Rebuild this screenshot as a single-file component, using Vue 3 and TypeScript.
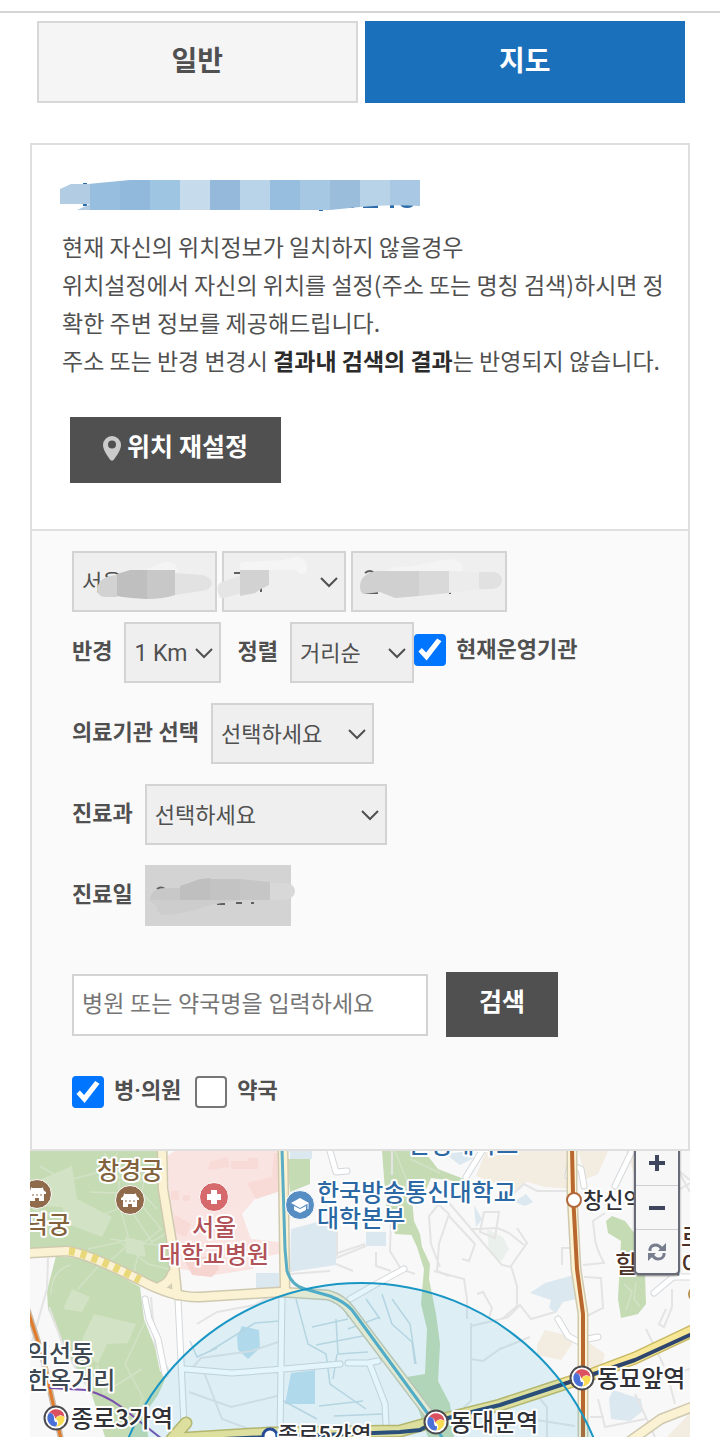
<script setup lang="ts">
import { ref } from 'vue'

interface MapLabel {
  text: string
  x: number
  y: number
  kind: string
  anchor?: 'start' | 'middle' | 'end'
}

const view = ref<'list' | 'map'>('map')
const radius = ref('1 Km')
const order = ref('거리순')
const institution = ref('')
const department = ref('')
const openNow = ref(true)
const hospital = ref(true)
const pharmacy = ref(false)
const keyword = ref('')

const mapLabels: MapLabel[] = [
  { text: '창경궁', x: 130, y: 1180, kind: 'palace', anchor: 'middle' },
  { text: '창덕궁', x: 70, y: 1234, kind: 'palace', anchor: 'end' },
  { text: '서울', x: 214, y: 1237, kind: 'clinic', anchor: 'middle' },
  { text: '대학교병원', x: 214, y: 1264, kind: 'clinic', anchor: 'middle' },
  { text: '한국방송통신대학교', x: 317, y: 1202, kind: 'school' },
  { text: '대학본부', x: 317, y: 1228, kind: 'school' },
  { text: '한성대학교', x: 408, y: 1154, kind: 'school' },
  { text: '익선동', x: 27, y: 1363, kind: 'area' },
  { text: '한옥거리', x: 27, y: 1390, kind: 'area' },
  { text: '종로3가역', x: 71, y: 1428, kind: 'station' },
  { text: '종로5가역', x: 278, y: 1443, kind: 'station small' },
  { text: '동대문역', x: 450, y: 1432, kind: 'station' },
  { text: '창신역', x: 583, y: 1209, kind: 'station small' },
  { text: '동묘앞역', x: 597, y: 1388, kind: 'station' },
  { text: '힐스테이', x: 615, y: 1274, kind: 'estate' },
  { text: '로', x: 681, y: 1247, kind: 'estate' },
]

const interchanges = [
  { x: 56, y: 1419 },
  { x: 436, y: 1423 },
  { x: 582, y: 1379 },
]

const titleMosaic = ['#b1cce3', '#97bddf', '#91b9db', '#9ec5e2', '#c6dbec', '#95b9da', '#b9d4e8', '#98bedf', '#a7c8e2', '#9abddc', '#b8d2e7', '#a8c8e3']
</script>

<template>
  <main class="page">
    <nav class="tabs" aria-label="보기 방식">
      <button type="button" class="tab" :class="{ active: view === 'list' }" @click="view = 'list'">일반</button>
      <button type="button" class="tab" :class="{ active: view === 'map' }" @click="view = 'map'">지도</button>
    </nav>

    <div class="content">
      <section class="panel">
        <div class="intro">
          <svg class="address" width="370" height="36" viewBox="0 0 370 36" aria-hidden="true">
            <defs>
              <clipPath id="smudge">
                <path d="M0 9 L11 4 L28 4 L70 0 H360 V26 Q330 24 300 27 L260 31 H15 L30 24 H0Z" />
              </clipPath>
            </defs>
            <path class="address-ink" d="M23 3h4v23h-4zM259 29h4v2h-4zM289 26h5v2h-5zM303 25h15v3h-15zM330 25h4v3h-4zM340 24h14q-1 4-7 4t-7-4z" />
            <g clip-path="url(#smudge)">
              <rect v-for="(c, i) in titleMosaic" :key="i" :x="i * 30" y="0" width="30" height="30" :fill="c" />
            </g>
          </svg>
          <p class="guide">
            현재 자신의 위치정보가 일치하지 않을경우<br />
            위치설정에서 자신의 위치를 설정(주소 또는 명칭 검색)하시면 정확한 주변 정보를 제공해드립니다.<br />
            주소 또는 반경 변경시 <strong>결과내 검색의 결과</strong>는 반영되지 않습니다.
          </p>
          <button type="button" class="dark locate">
            <svg width="18" height="25" viewBox="0 0 18 25" aria-hidden="true">
              <path fill="#cbcbcb" fill-rule="evenodd" d="M9 0a9 9 0 0 1 9 9c0 5-5 12-7.500 15q-1.500 1.500-3 0C5 21 0 14 0 9a9 9 0 0 1 9-9zm0 4.500a4 4 0 1 0 0 8 4 4 0 0 0 0-8z" />
            </svg>
            <span>위치 재설정</span>
          </button>
        </div>

        <form class="filters" @submit.prevent>
          <div class="row region">
            <span class="picker city">
              <select aria-label="시도"><option>서울</option></select>
              <svg class="cover" viewBox="0 0 145 61" aria-hidden="true">
                <path d="M72 19 L92 11 Q106 9 106 21 H62Z" fill="#f4f4f4" />
                <path d="M25 38 Q27 25 45 24 V46 H35 Q26 47 25 38Z" fill="#d2d2d2" />
                <path d="M45 23 L58 19 H75 V48 Q55 47 45 45Z" fill="#bfbfbf" />
                <path d="M75 19 H103 V44 Q92 48 75 48Z" fill="#c8c8c8" />
                <path d="M103 22 L130 24 Q139 26 140 32 Q139 39 129 40 L103 44Z" fill="#e2e2e2" />
              </svg>
            </span>
            <span class="picker district">
              <select aria-label="시군구"><option></option></select>
              <svg class="chevron" width="18" height="12" viewBox="0 0 18 12" aria-hidden="true"><path d="M1 2l8 8 8-8" /></svg>
              <svg class="cover" viewBox="0 0 124 61" aria-hidden="true">
                <path class="ink" d="M12 22h7M39 36v5" />
                <path d="M18 19 Q16 11 23 11 L60 9 75 6 Q85 7 85 17 Q85 24 79 23 L74 19Z" fill="#f5f5f5" />
                <path d="M-3 44 Q-8 32 3 30 L20 24 V42 L2 47 Q-2 48-3 44Z" fill="#e5e5e5" />
                <path d="M18 19 H47 V34 L39 38 33 42 18 45Z" fill="#d2d2d2" />
              </svg>
            </span>
            <span class="picker town">
              <select aria-label="읍면동"><option></option></select>
              <svg class="cover" viewBox="0 0 156 61" aria-hidden="true">
                <path class="ink" d="M14 22q5-4 9 0M14 42h13M99 40v3" />
                <path d="M35 20 Q42 14 56 16 L97 8 Q112 8 112 20Z" fill="#f4f4f4" />
                <path d="M9 36 Q9 23 25 20 H68 V45 L44 47 29 41 13 43 Q9 42 9 36Z" fill="#d0d0d0" />
                <path d="M68 20 H98 V42 L68 45Z" fill="#d9d9d9" />
                <path d="M98 20 L128 22 V38 L98 42Z" fill="#ececec" />
                <path d="M128 21 H143 Q151 23 151 29 Q151 36 142 38 H128Z" fill="#e1e1e1" />
              </svg>
            </span>
          </div>

          <div class="row">
            <label for="radius">반경</label>
            <span class="picker radius">
              <select id="radius" v-model="radius"><option>1 Km</option><option>3 Km</option><option>5 Km</option></select>
              <svg class="chevron" width="18" height="12" viewBox="0 0 18 12" aria-hidden="true"><path d="M1 2l8 8 8-8" /></svg>
            </span>
            <label for="order" class="next">정렬</label>
            <span class="picker order">
              <select id="order" v-model="order"><option>거리순</option><option>이름순</option></select>
              <svg class="chevron" width="18" height="12" viewBox="0 0 18 12" aria-hidden="true"><path d="M1 2l8 8 8-8" /></svg>
            </span>
            <input id="open" v-model="openNow" type="checkbox" class="tick inline" />
            <label for="open" class="tick-label">현재운영기관</label>
          </div>

          <div class="row spaced">
            <label for="institution">의료기관 선택</label>
            <span class="picker institution">
              <select id="institution" v-model="institution"><option value="">선택하세요</option></select>
              <svg class="chevron" width="18" height="12" viewBox="0 0 18 12" aria-hidden="true"><path d="M1 2l8 8 8-8" /></svg>
            </span>
          </div>

          <div class="row spaced">
            <label for="department">진료과</label>
            <span class="picker department">
              <select id="department" v-model="department"><option value="">선택하세요</option></select>
              <svg class="chevron" width="18" height="12" viewBox="0 0 18 12" aria-hidden="true"><path d="M1 2l8 8 8-8" /></svg>
            </span>
          </div>

          <div class="row spaced">
            <label for="day">진료일</label>
            <span class="picker day">
              <input id="day" type="text" readonly />
              <svg class="cover" viewBox="0 0 146 61" aria-hidden="true">
                <path class="ink" d="M12 24q4-3 8 0M72 39h8M91 38h6M106 38h3" />
                <path d="M5 35 Q5 24 20 23 H35 V35Z" fill="#c8c8c8" />
                <path d="M35 21 L55 14 65 13 V35 H35Z" fill="#bfbfbf" />
                <path d="M65 14 H95 V35 H65Z" fill="#c3c3c3" />
                <path d="M95 14 L125 17 V35 H95Z" fill="#c6c6c6" />
                <path d="M125 18 L142 18 Q150 20 150 26 Q150 32 143 34 L125 36Z" fill="#d8d8d8" />
                <path d="M5 35 H95 L65 40 Q40 49 20 50 Q12 50 12 42Z" fill="#cdcdcd" />
              </svg>
            </span>
          </div>

          <div class="row search">
            <input v-model="keyword" type="text" class="keyword" aria-label="병원 또는 약국명" placeholder="병원 또는 약국명을 입력하세요" />
            <button type="submit" class="dark submit"><span>검색</span></button>
          </div>

          <div class="row kinds">
            <input id="hospital" v-model="hospital" type="checkbox" class="tick" />
            <label for="hospital" class="tick-label">병·의원</label>
            <input id="pharmacy" v-model="pharmacy" type="checkbox" class="tick second" />
            <label for="pharmacy" class="tick-label">약국</label>
          </div>
        </form>
      </section>

      <section class="map" aria-label="지도">
        <svg class="tiles" viewBox="30 1152 660 286" role="img" aria-label="종로 일대 지도">
          <defs>
            <g id="palace">
              <circle r="14.500" fill="#8f6a4b" stroke="#fff" stroke-width="1" />
              <path fill="#fff" d="M-6-7l1 1H5l1-1q0 4 3 5v2H7V7H2V4h-4v3h-5V0h-2v-2q3-1 3-5z" />
              <path stroke="#8f6a4b" fill="none" d="M-4 0v2M0 0v2M4 0v2" />
            </g>
            <g id="interchange">
              <circle r="11.500" fill="#fff" stroke="#4c4c50" stroke-width="2" />
              <path fill="#dc5160" d="M-7-5A8.500 8.500 0 0 1 8.500-1Q5-4 2-2T-1 1Q-1-5-7-5z" />
              <path fill="#4a6fd6" d="M-7-5Q-2-5-2 0T1 4Q1 8 0 8.500A8.500 8.500 0 0 1-7-5z" />
              <path fill="#f9dc54" d="M8.500-1A8.500 8.500 0 0 1 0 8.500Q4 5 1 2T3-2Q6-3 8.500-1z" />
            </g>
          </defs>
          <rect x="30" y="1152" width="660" height="286" fill="#f8f8f8" />

          <g fill="#c5dbb4">
            <path d="M30 1152H160L158 1170 166 1215 171 1270 165 1292 140 1281 90 1254 30 1250Z" />
            <path d="M56 1257L90 1260 140 1288 144 1320 155 1348 160 1372 166 1378 158 1396 146 1413 148 1438H105L92 1396 65 1350 48 1310 47 1292Z" />
            <path d="M382 1152H424L438 1170 464 1180 462 1183 431 1179 424 1195 412 1200 412 1236 395 1235 386 1205Z" />
            <path d="M287 1160H310V1185L290 1193Z" />
            <path d="M412 1200L414 1222 420 1235 422 1248 430 1265 429 1280 436 1315 440 1345 438 1382 450 1405 454 1438H428L407 1378 425 1375 427 1330 421 1305 424 1270 417 1248 411 1235Z" />
            <path d="M606 1222L612 1217 625 1222 635 1235V1260L645 1275 646 1305 638 1315 621 1319 618 1300 621 1242 608 1234Z" />
          </g>
          <g fill="#d2e2c5">
            <path d="M39 1181L72 1167 77 1200 112 1218 102 1238 70 1226 62 1208 34 1207Z" />
            <path d="M63 1310L72 1290 90 1298 82 1313Z" />
            <path d="M83 1338L94 1315 136 1325 128 1344 107 1345 98 1365 82 1352Z" />
            <path d="M90 1370L112 1374 106 1390 86 1386Z" />
            <path d="M125 1238l18 4 3 16-20-4z" />
          </g>
          <g fill="none" stroke="#d2e2c6" stroke-width="1.500">
            <path d="M40 1167L65 1182 104 1172 118 1154M90 1193L143 1195 157 1210M104 1154L120 1179 140 1182 158 1182M92 1220L120 1209 130 1244 110 1262M119 1182V1207M149 1163L139 1203 161 1230 140 1247 133 1278M110 1240L164 1247M88 1250L120 1243 148 1265 169 1270M134 1216l18 27 15-9M33 1210l28 9 26-4M51 1296q0-25 20-30M78 1290l24-27M145 1323l-20 42 18 34-15 39M97 1366l7 28 38-24" />
            <path d="M624 1285l8 8-6 18M636 1284l-2 16 6 8M395 1152l12 30-10 45M410 1160l30 14" />
          </g>

          <g fill="#fae4e1">
            <path d="M167 1157L175 1152H281V1192L255 1200 242 1215 251 1240 279 1243V1255L262 1258 253 1270 215 1276 180 1270 175 1260 170 1210Z" />
            <path d="M185 1262L216 1255 219 1270 212 1278 192 1276Z" fill="#f6d4cf" />
          </g>
          <g fill="#f8dad7"><path d="M208 1171l2-8 17-5 3 10zM231 1162h17v-3h10v11h-27zM247 1184l33-8v16l-24 8zM175 1216l16 9-5 13-13-5zM219 1222l16 8-4 11-17-9zM274 1154l7 0v26l-9-4zM171 1192h8v9h-8zM183 1196h7v6h-7z" /></g>
          <g fill="#dce8ef">
            <path d="M291 1230L336 1218V1266L290 1273Z" /><path d="M256 1274h23v15h-23zM366 1233h20v14h-20zM290 1152h22v8h-22z" />
            <path d="M530 1294L545 1284 574 1276 577 1300 563 1303 556 1314 549 1309 551 1301Z" /><path d="M609 1400L613 1391 641 1400 643 1412 630 1422 611 1420ZM514 1203l12-8 7 8-8 4zM474 1206l8 14-6 8zM445 1155l25-3 4 7-14 7zM532 1152h22l-6 10-12-3z" />
          </g>
          <path d="M487 1230l16 8 6 12-8 13-12-12z" fill="#eaf0ec" />
          <g fill="#c5e1ed"><path d="M237 1338l5-11 17 4 1 18-12 11-10-9zM291 1374l24-3v34h-30z" /></g>
          <g fill="#f3ece1">
            <path d="M476 1177L486 1152H574V1190L545 1188 527 1183 514 1192 503 1187Z" />
            <path d="M626 1152h10v28zM545 1331l16 4 15 4-15 22-24-5 0-10zM588 1343l17 12-4 15-15-3zM667 1438l23-24v24zM578 1152h30l-10 23-12 5z" />
          </g>

          <g fill="none" stroke="#e4e4e4" stroke-width="2">
            <path d="M48 1259L47 1290 30 1350M49 1308L66 1354 88 1389M151 1298l4 48 15 28M197 1325l20-12 38-7 22-12M193 1368l8-9 51-7 29-10M202 1368l20 52 38 14M189 1393l42 15 50-12" />
            <path d="M392 1176V1152M337 1232v25M391 1220l-1 32 11 18 14 5M336 1259l30-12M376 1253v14l15 5M335 1255l30-10M290 1275l40-3M336 1265l17 7" />
            <path d="M443 1200L429 1217 431 1245 440 1268M438 1205L449 1215 439 1245 437 1272M449 1217L475 1245 469 1262 462 1260M444 1198L502 1266 511 1268M437 1272l12 5M484 1213l15 0-4 26-15-6z" />
            <path d="M470 1230q12 0 27-1 8 3 12 5l15 12M517 1229l10 15-16 23 6 20v20l-15 13M506 1201l18-16 13 7h32M570 1249h-8v17M583 1266l21-2q-8-15-9-24l-2-18 12-8M584 1278l17 1 2 30-16 8" />
            <path d="M434 1272l30 8 3 20 0 20M471 1324v35M471 1360l12 2 17-12 30-12M477 1295l6-2 9 16-3 10M471 1327l30-7 7-2 12-12 11 14 24-7M471 1359V1402L464 1408" />
            <path d="M646 1330l18 37M598 1400l7 28 40-8M635 1395l20 43M666 1310l-7 15 5 3 8-20v-18M645 1382l45-12M666 1370l9 35M590 1418h14M540 1400l7 8v30M530 1420l45 7M680 1175l10 18M680 1190l10-6M668 1163l22 18" />
          </g>
          <g fill="none" stroke="#c9dbe2" stroke-width="1.500">
            <path d="M190 1342l7 16 20-9M280 1322l-25 2-45 28M296 1300l12 45 18 10 4 30 36 25M316 1346l52-10M312 1328l36-8M336 1320l2 35 30-2M348 1330l32-12M382 1295l10 30 20 18 3 22M392 1300l18 25 6 40M348 1318l-2-6M319 1407l44-5M280 1400l37 20M334 1417l48-2M337 1355l-4 25M366 1300l14 20" />
          </g>

          <g fill="none" stroke-linecap="round" stroke-linejoin="round">
            <g stroke="#d4d8db" stroke-width="7">
              <path d="M178 1300L184 1425M282 1297L280 1438M145 1300L149 1320 158 1340 165 1375M185 1370L232 1374 284 1370 340 1365M348 1364H368L378 1362M370 1366L385 1405 386 1425M350 1300L378 1284 404 1270M330 1152L336 1173 347 1172M568 1177L570 1166 581 1170 584 1187M615 1187L632 1152M558 1320L568 1337 577 1342 598 1338M654 1294L673 1278 690 1278M466 1178L482 1152" />
            </g>
            <g stroke="#fff" stroke-width="5">
              <path d="M178 1300L184 1425M282 1297L280 1438M145 1300L149 1320 158 1340 165 1375M185 1370L232 1374 284 1370 340 1365M348 1364H368L378 1362M370 1366L385 1405 386 1425M350 1300L378 1284 404 1270M330 1152L336 1173 347 1172M568 1177L570 1166 581 1170 584 1187M615 1187L632 1152M558 1320L568 1337 577 1342 598 1338M654 1294L673 1278 690 1278M466 1178L482 1152" />
            </g>
            <g stroke="#cfc9b0" stroke-width="11">
              <path d="M162 1150L163 1190 172 1245 177 1296M283 1150L285 1293" />
              <path d="M28 1254L66 1252Q84 1253 140 1281 173 1299 200 1298L280 1293 328 1296Q342 1300 350 1311L438 1427M161 1287Q170 1283 172 1275" />
              <path d="M572 1150L572 1195 576 1270 583 1315 583 1440M630 1442L661 1420 692 1408" />
            </g>
            <g stroke="#faf2d2" stroke-width="8">
              <path d="M162 1150L163 1190 172 1245 177 1296M283 1150L285 1293" />
              <path d="M28 1254L66 1252Q84 1253 140 1281 173 1299 200 1298L280 1293 328 1296Q342 1300 350 1311L438 1427M161 1287Q170 1283 172 1275" />
              <path d="M572 1150L572 1195 576 1270 583 1315 583 1440M630 1442L661 1420 692 1408" />
            </g>
            <path d="M69 1252Q88 1254 140 1281" stroke="#e8d87a" stroke-width="8" stroke-linecap="butt" stroke-dasharray="6 6" />
            <path d="M172 1440L186 1424M172 1440L270 1434 400 1432 436 1422 500 1406 582 1379 635 1359 692 1332" stroke="#c7b963" stroke-width="13" />
            <path d="M172 1440L186 1424M172 1440L270 1434 400 1432 436 1422 500 1406 582 1379 635 1359 692 1332" stroke="#f7e797" stroke-width="10" />
            <path d="M200 1441L270 1438 400 1433 420 1431 436 1422 500 1406 582 1379 635 1361 692 1335" stroke="#2e456f" stroke-width="4" />
            <path d="M572 1150L573 1195 577 1270 583 1315 583 1440" stroke="#b8682f" stroke-width="4" />
            <path d="M28 1312L42 1355 52 1400 61 1440" stroke="#c9b9a5" stroke-width="6" />
            <path d="M28 1312L42 1355 52 1400 61 1440" stroke="#e07b2c" stroke-width="3" />
            <path d="M50 1389L86 1391Q105 1396 120 1407L162 1440" stroke="#7950ae" stroke-width="2" />
            <path d="M282 1150L285 1250 287 1272Q292 1287 305 1290L330 1297Q345 1303 352 1311L428 1415 443 1440" stroke="#59adc5" stroke-width="3" />
          </g>

          <circle cx="361" cy="1536" r="252" fill="#09a5df" fill-opacity=".11" stroke="#1a96c5" stroke-width="2" />

          <circle cx="574" cy="1201" r="7" fill="#fff" stroke="#b3683a" stroke-width="2" />
          <circle cx="270" cy="1437" r="7" fill="#fff" stroke="#264a96" stroke-width="3" />
          <circle cx="696" cy="1295" r="8" fill="#b99150" />
          <use href="#palace" transform="translate(130 1201)" />
          <use href="#palace" transform="translate(37 1195)" />
          <g transform="translate(214 1198)"><circle r="14.500" fill="#d5696c" stroke="#fff" /><path fill="#fff" d="M-3-7h6v4h4v6H3v4h-6V3h-4v-6h4z" /></g>
          <g transform="translate(300 1206)">
            <circle r="14.500" fill="#568dc3" stroke="#fff" />
            <path fill="#fff" d="M0-7L9-2 0 3-9-2zM-6 1l6 3 6-3v4L0 8-6 5z" />
            <path stroke="#fff" d="M8-2v6" />
          </g>
          <use v-for="s in interchanges" :key="s.x" href="#interchange" :transform="`translate(${s.x} ${s.y})`" />

          <text v-for="l in mapLabels" :key="l.text" :x="l.x" :y="l.y" :class="['place', l.kind]" :text-anchor="l.anchor ?? 'start'">{{ l.text }}</text>
        </svg>

        <div class="zoom">
          <button type="button" aria-label="확대"><svg width="18" height="18" viewBox="0 0 18 18"><path d="M9 1v16M1 9h16" /></svg></button>
          <button type="button" aria-label="축소"><svg width="18" height="18" viewBox="0 0 18 18"><path d="M1 9h16" /></svg></button>
          <button type="button" aria-label="새로고침">
            <svg class="refresh" width="20" height="20" viewBox="0 0 20 20"><path d="M3 9V7q1-4 6-4 3 0 6 4M17 11v2q-1 4-6 4-3 0-6-4" /><path class="tip" d="M19 1v8h-8zM1 19v-8h8z" /></svg>
          </button>
        </div>
      </section>
    </div>
  </main>
</template>

<style>
body {
  margin: 0;
  background: #fff;
  overflow-x: hidden;
}
</style>

<style scoped>
.page {
  margin-top: 11px;
  border-top: 2px solid #d5d5d5;
  font-family: Roboto, "Noto Sans CJK KR", sans-serif;
  color: #505050;
}
* { box-sizing: border-box; }
button, input, select { font-family: inherit; color: inherit; margin: 0; border-radius: 0; }
.tabs { display: flex; gap: 7px; padding: 8px 35px 0 37px; }
.tab {
  flex: 1;
  height: 82px;
  padding: 0;
  border: 2px solid #d8d8d8;
  background: #f5f5f5;
  font-size: 28px;
  line-height: 40px;
  font-weight: 700;
}
.tab.active { background: #1b70bb; border-color: #1b70bb; color: #fff; }
.content { margin: 40px 30px 0; }
.panel { border: 2px solid #dfdfdf; }
.intro { padding: 35px 20px 46px 30px; }
.address { display: block; margin: 0 -2px; }
.address-ink { fill: #2b6ca9; }
.guide {
  margin: 11px 0 38px;
  font-family: "Noto Sans CJK KR", Roboto, sans-serif;
  font-size: 23px;
  line-height: 38px;
  word-break: break-all;
}
.guide strong { color: #2b2b2b; font-weight: 700; }
.dark {
  display: flex;
  align-items: center;
  justify-content: center;
  border: 0;
  background: #505050;
  color: #fff;
  font-size: 25px;
  line-height: 36px;
  font-weight: 700;
}
.dark span { padding-bottom: 4px; }
.locate { gap: 6px; width: 211px; height: 66px; margin-left: 8px; padding: 0; }
.locate svg { margin-bottom: 4px; }
.filters { padding: 20px 40px 40px; border-top: 2px solid #dfdfdf; background: #fafafa; }
.row { display: flex; align-items: center; font-size: 22px; }
.row + .row { margin-top: 10px; }
.row.spaced { margin-top: 20px; }
.region { gap: 5px; }
label { margin-right: 12px; padding-bottom: 2px; font-weight: 700; line-height: 32px; white-space: nowrap; }
label.next { margin-left: 16px; }
.picker { position: relative; display: block; height: 61px; }
.picker select, .picker input {
  display: block;
  width: 100%;
  height: 100%;
  padding: 2px 8px 0;
  border: 2px solid #d3d3d3;
  background: #efefef;
  appearance: none;
  font-size: 22px;
}
.picker input { background: #d3d3d3; }
.city { width: 145px; }
.district, .order { width: 124px; }
.town { width: 156px; }
.radius { width: 97px; }
.picker.radius select { font-size: 23px; }
.institution { width: 163px; }
.department { width: 242px; }
.day { width: 146px; }
.chevron { position: absolute; right: 8px; top: 25px; fill: none; stroke: #505050; stroke-width: 2; pointer-events: none; }
.cover { position: absolute; inset: 0; width: 100%; height: 100%; overflow: visible; pointer-events: none; }
.ink { fill: none; stroke: #606060; stroke-width: 2; }
.tick {
  flex: none;
  display: grid;
  place-items: center;
  width: 32px;
  height: 32px;
  border: 2px solid #767676;
  border-radius: 4px;
  background: #fff;
  appearance: none;
}
.tick:checked { border-color: #0075ff; background: #0075ff; }
.tick:checked::after {
  content: "";
  width: 24px;
  height: 24px;
  background: #fff;
  clip-path: polygon(2% 58%, 16% 44%, 34% 62%, 80% 4%, 98% 16%, 36% 96%);
}
.tick.inline { margin-bottom: 6px; }
.tick.second { margin-left: 14px; }
.tick-label { margin: 0 0 0 10px; }
.tick.inline + .tick-label { padding-bottom: 6px; }
.row.search { gap: 18px; margin-top: 46px; }
.keyword {
  width: 356px;
  height: 62px;
  padding: 0 8px;
  border: 2px solid #d3d3d3;
  background: #fff;
  font-size: 23px;
}
.keyword::placeholder { color: #757575; }
.submit { width: 112px; height: 65px; padding: 0; }
.row.kinds { margin-top: 38px; }
.map { position: relative; overflow: hidden; }
.tiles { display: block; width: 100%; }
.place {
  font-family: "Noto Sans CJK KR", sans-serif;
  font-size: 24px;
  font-weight: 500;
  paint-order: stroke;
  stroke: #fff;
  stroke-width: 4px;
  stroke-linejoin: round;
}
.small { font-size: 22px; }
.palace { fill: #82623d; }
.clinic { fill: #b15258; }
.school { fill: #2c68a3; }
.area { fill: #3d4853; }
.station { fill: #2f3136; }
.estate { fill: #4b3027; }
.zoom {
  position: absolute;
  top: -12px;
  right: 10px;
  width: 46px;
  border: 2px solid #686b78;
  border-radius: 5px;
  background: #f7f7f8;
  box-shadow: 0 1px 2px #777;
}
.zoom button { display: grid; place-items: center; width: 100%; height: 44px; padding: 0; border: 0; background: transparent; }
.zoom button + button { border-top: 1px solid #cfcfd3; }
.zoom svg { fill: none; stroke: #3e465e; stroke-width: 4; }
.zoom .refresh { stroke: #777d8d; stroke-width: 3; }
.zoom .tip { fill: #777d8d; stroke: none; }
</style>
